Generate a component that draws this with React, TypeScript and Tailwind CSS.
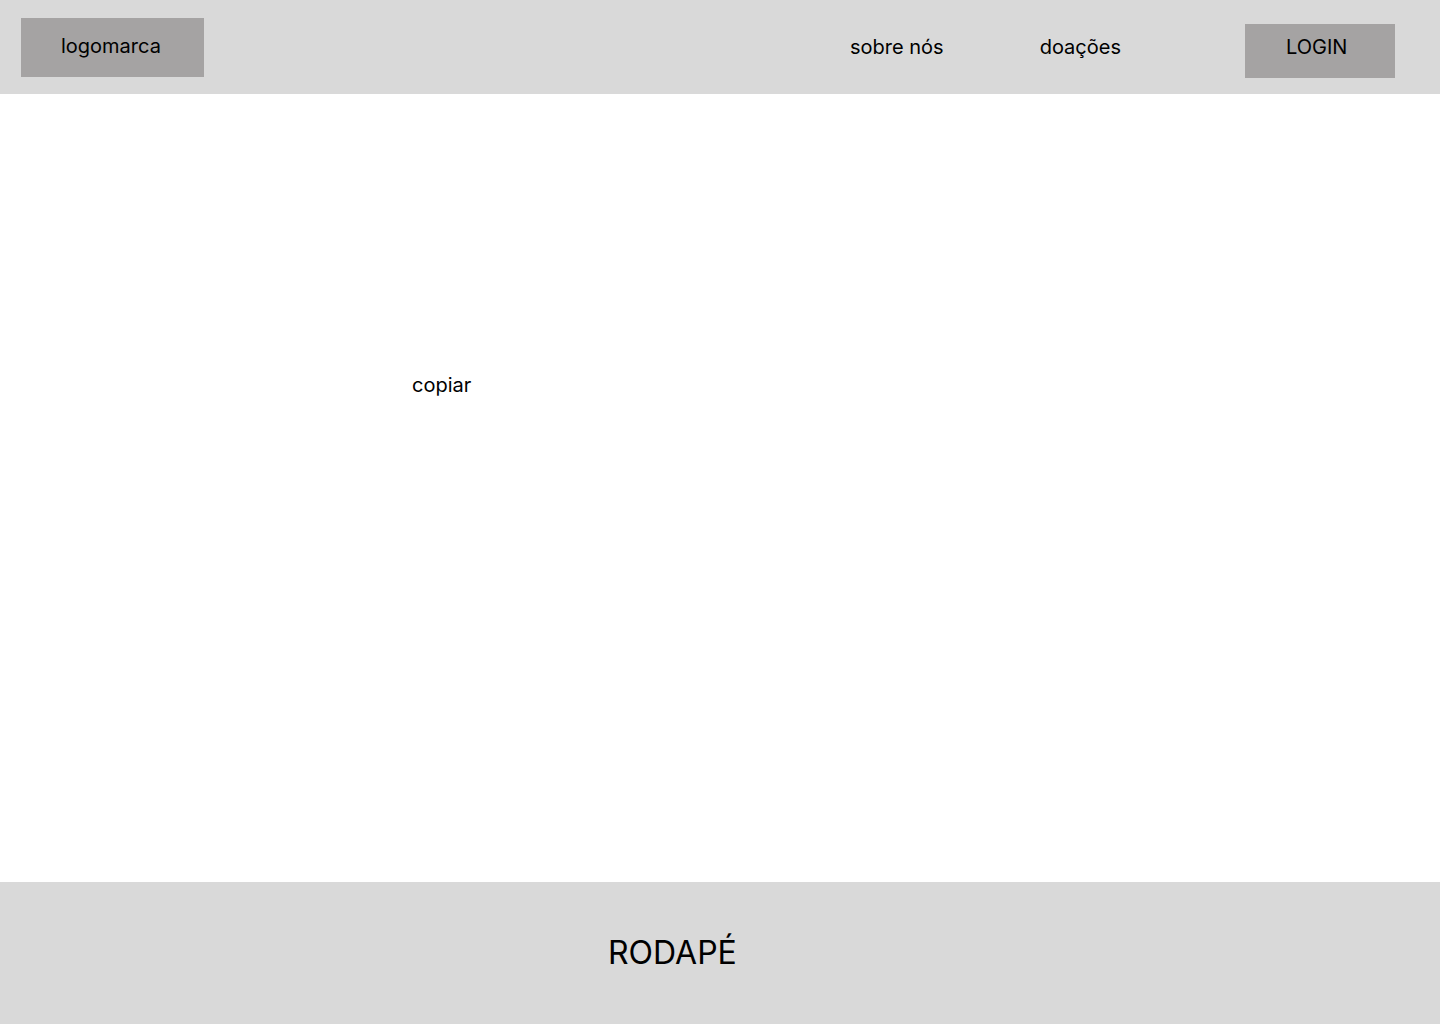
export default function App() {
  return (
    <div className="w-[1440px] h-[1024px] flex flex-col bg-white text-black" style={{ fontFamily: 'Inter, "Noto Sans", sans-serif' }}>
      <header className="h-[94px] shrink-0 bg-[#d9d9d9] flex items-start">
        <div className="ml-[21px] mt-[18px] w-[183px] h-[59px] bg-[#a5a3a3] pl-[40px] pt-[16px] text-[20px] leading-[24px]">logomarca</div>
        <div className="ml-[646px] mt-[35px] text-[20px] leading-[24px]">sobre nós</div>
        <div className="ml-[96px] mt-[35px] text-[20px] leading-[24px]">doações</div>
        <div className="ml-[124px] mt-[24px] w-[150px] h-[54px] bg-[#a5a3a3] pl-[41px] pt-[11px] text-[20px] leading-[24px]">LOGIN</div>
      </header>
      <main className="flex-1 pl-[412px] pt-[279px]">
        <div className="text-[20px] leading-[24px]">copiar</div>
      </main>
      <footer className="h-[142px] shrink-0 bg-[#d9d9d9] pl-[608px] pt-[51px]">
        <div className="text-[32px] leading-[39px]">RODAPÉ</div>
      </footer>
    </div>
  );
}
